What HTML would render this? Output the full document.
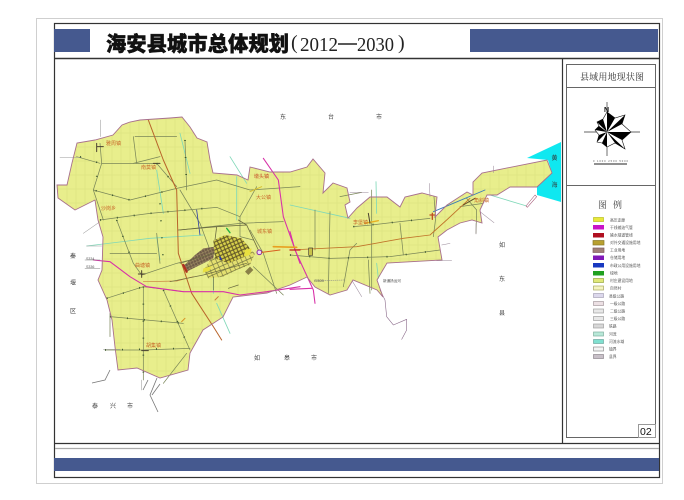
<!DOCTYPE html>
<html><head><meta charset="utf-8"><style>
html,body{margin:0;padding:0;background:#fff;width:684px;height:500px;overflow:hidden}
svg{display:block}
text{font-family:"Liberation Sans","Noto Sans CJK SC",sans-serif}
.s{font-family:"Liberation Serif","Noto Serif CJK SC",serif}
.l{font-size:6px;fill:#444}
.o{font-size:5px;fill:#c8682a}
.t{font-size:3.6px;fill:#555}
</style></head><body>
<svg width="684" height="500" viewBox="0 0 684 500" xmlns="http://www.w3.org/2000/svg">
<defs>
<clipPath id="cp"><path id="county" d="M57,185 L67,185 L72,163 L77,143 L95,140 L113,135 L122,125 L130,122 L140,120 L170,118 L182,117 L190,127 L197,138 L207,142 L210,160 L213,173 L237,175 L248,180 L250,167 L270,172 L290,172 L307,167 L313,159 L325,173 L323,193 L333,183 L347,188 L350,202 L345,205 L348,218 L357,208 L370,197 L387,197 L400,207 L405,197 L422,193 L437,197 L435,217 L447,205 L467,192 L473,195 L473,182 L482,173 L547,160 L552,173 L537,187 L510,187 L497,195 L487,195 L480,210 L482,223 L472,220 L460,223 L447,230 L438,237 L442,260 L387,263 L377,280 L383,297 L377,290 L353,280 L347,290 L330,295 L315,287 L307,277 L290,285 L267,293 L233,297 L223,317 L203,330 L190,353 L188,370 L160,378 L137,368 L118,370 L115,347 L112,320 L107,300 L98,280 L102,270 L103,237 L98,220 L95,200 L75,210 L58,198 Z"/></clipPath>
<pattern id="vp" width="9" height="14" patternUnits="userSpaceOnUse"><path d="M4,0V14M0,7H9" stroke="#d8e07e" stroke-width=".5" fill="none"/></pattern>
<pattern id="cb" width="9" height="9" patternUnits="userSpaceOnUse" patternTransform="rotate(-24)"><rect width="9" height="9" fill="#6e5a48"/><path d="M4,0V9M0,4H9" stroke="#a89868" stroke-width="1.4"/></pattern>
<pattern id="cy" width="11" height="11" patternUnits="userSpaceOnUse" patternTransform="rotate(-24)"><rect width="11" height="11" fill="#d8d04a"/><path d="M5,0V11M0,5H11" stroke="#5e5428" stroke-width="3"/></pattern>
<pattern id="ce" width="14" height="14" patternUnits="userSpaceOnUse" patternTransform="rotate(-24)"><rect width="14" height="14" fill="#e4e070"/><path d="M7,0V14M0,7H14" stroke="#6e7040" stroke-width="1.8"/></pattern>
</defs>
<rect width="684" height="500" fill="#fff"/>
<rect x="36.500" y="18.500" width="626" height="465" fill="#fff" stroke="#cfcfcf"/>
<rect x="54.500" y="23.500" width="605" height="454" fill="#fff" stroke="#333" stroke-width="1.2"/>
<rect x="54" y="29" width="36" height="23" fill="#45598f"/>
<rect x="470" y="29" width="188" height="23" fill="#45598f"/>
<text x="106" y="51" font-size="20.2" font-weight="900" fill="#111" stroke="#111" stroke-width=".5" textLength="183">海安县城市总体规划</text>
<g class="s" fill="#222">
<text x="291" y="49" class="s" font-size="20">(</text>
<text x="300" y="51" class="s" font-size="20" textLength="38" lengthAdjust="spacingAndGlyphs">2012</text>
<path d="M338,44H357" stroke="#222" stroke-width="1.4"/>
<text x="357" y="51" class="s" font-size="20" textLength="37" lengthAdjust="spacingAndGlyphs">2030</text>
<text x="398" y="49" class="s" font-size="20">)</text>
</g>
<path d="M54,58.500H659" stroke="#333" stroke-width="1.4"/>
<path d="M54,443.500H659" stroke="#333" stroke-width="1.2"/>
<path d="M562.500,58V443" stroke="#333" stroke-width="1.2"/>
<path d="M55,448.500H659" stroke="#aaa" stroke-width="1.2"/>
<rect x="54" y="458" width="605" height="13" fill="#45598f"/>
<rect x="566.500" y="64.500" width="89" height="373" fill="#fff" stroke="#666"/>
<path d="M566,87.500H656M566,185.500H656" stroke="#666"/>
<text x="580" y="80" class="s" font-size="9" fill="#333" textLength="64">县域用地现状图</text>
<rect x="638.500" y="424.500" width="17" height="13" fill="#fff" stroke="#999"/>
<text x="640" y="435" font-size="10.500" fill="#111">02</text>

<!-- sea -->
<path d="M527,158 L561,142 L561,202 L537,195 L537,187 L552,173 L548,160 Z" fill="#0fe8f0"/>
<text x="551.500" y="160" class="t" style="font-size:6px;fill:#333">黄</text>
<text x="551.500" y="187" class="t" style="font-size:6px;fill:#333">海</text>

<!-- county -->
<use href="#county" fill="#e8ee8c"/>
<g clip-path="url(#cp)"><rect x="50" y="110" width="510" height="280" fill="url(#vp)"/></g>

<!-- west half, coordinates from 3x crop -->
<g transform="translate(50 120) scale(.33333)" fill="none" stroke-linejoin="round" stroke-linecap="round">
<g stroke="#7fd8b8" stroke-width="2.500">
<path d="M110,378 L300,355 L460,345"/><path d="M390,40 L420,160"/><path d="M540,110 L590,190"/><path d="M560,170 L560,300"/><path d="M320,150 L340,280"/><path d="M320,350 L330,420"/><path d="M490,430 L490,520"/><path d="M500,550 L540,640"/>
</g>
<g stroke="#7a8658" stroke-width="2.200">
<path d="M130,210 L240,240 L380,205 L500,180 L600,210 L750,200"/>
<path d="M150,300 L300,280 L500,262 L570,290"/>
<path d="M390,330 L570,310 L700,305"/>
<path d="M200,300 L250,430 L275,465"/>
<path d="M275,465 L380,430 L500,400"/>
<path d="M170,535 L280,500 L400,515"/>
<path d="M180,590 L400,610"/>
<path d="M165,690 L280,690 L420,685"/>
<path d="M280,500 L280,780"/>
<path d="M340,510 L420,690"/>
<path d="M150,70 L155,130 L130,210"/>
<path d="M155,130 L320,130 L380,200"/>
<path d="M390,210 L450,310 L480,390"/>
<path d="M250,50 L260,130"/>
<path d="M320,340 L330,430"/>
<path d="M620,200 L570,290 L570,350 L610,360"/>
<path d="M610,440 L700,525"/>
<path d="M600,330 L640,400 L680,520"/>
<path d="M80,110 L150,130"/>
<path d="M405,60 L410,210"/>
<path d="M410,700 L340,790"/>
<path d="M255,50 H380M130,210 L160,300M250,130 L330,110M180,400 H320M180,580 L180,650"/>
</g>
<path d="M440,270 L450,345" stroke="#2a3aa8" stroke-width="2.400"/>
<!-- highways -->
<path d="M295,0 L340,120 L380,210 L385,400 L425,520 L490,620 L515,660" stroke="#b8642a" stroke-width="3"/>
<path d="M130,420 L180,425 L240,470 L290,500 L400,515 L520,515 L570,525 L650,515 L750,500" stroke="#d830a8" stroke-width="3.200"/>
<path d="M640,115 L685,180 L700,290 L750,430" stroke="#d830a8" stroke-width="3.200"/>
<path d="M280,485 L380,483 L430,470" stroke="#c88040" stroke-width="2"/>
<!-- town blobs -->
<g stroke="#4a4030" stroke-width="3">
<path d="M140,70V95M140,80H160"/><path d="M310,130H330"/><path d="M265,462H285M275,452V472"/><path d="M275,692H295"/><path d="M395,605L405,595" stroke="#d89020"/><path d="M495,540L505,530" stroke="#c88040"/><path d="M600,215L635,200" stroke="#d8c030"/>
</g>
<!-- outside thin stubs -->
<g stroke="#999" stroke-width="1.600">
<path d="M30,112H95"/><path d="M152,0V50"/><path d="M110,378H155"/><path d="M160,688H210"/><path d="M275,780V810"/><path d="M100,340L150,305"/>
</g>
<path d="M105,420H150M105,445H150" stroke="#777" stroke-width="1.400"/>
<!-- road markers -->
<g stroke="#3f5a30" stroke-width="5" stroke-dasharray="3 48" stroke-linecap="butt">
<path d="M90,110 L150,130 L130,210 L240,240 L380,205 M200,300 L250,430 M280,500 L280,780 M340,510 L420,690 M165,690 L420,685 M405,60 L410,210 M150,300 L300,280 L500,262 M320,130 L380,200 M170,535 L280,500 M180,590 L400,610 M330,250 L340,430"/>
</g>
</g>

<!-- city from 3x crop -->
<g transform="translate(170 220) scale(.33333)" stroke-linejoin="round" stroke-linecap="round" fill="none">
<path d="M125,115 L235,85 L255,100 L240,135 L200,150 L160,170 L115,175 L100,150 Z" fill="url(#ce)"/>
<path d="M38,140 L75,105 L100,85 L135,80 L130,115 L90,135 L50,155 Z" fill="url(#cb)"/>
<path d="M130,62 L165,45 L215,55 L240,85 L225,110 L175,130 L135,115 Z" fill="url(#cy)"/>
<path d="M40,135 L50,155" stroke="#b03020" stroke-width="7"/>
<path d="M225,90 L245,85 L240,105 L222,110Z" fill="#e8e040"/>
<path d="M100,145 L125,138 L118,152 L98,158Z" fill="#e8e040"/>
<path d="M170,25 L180,38" stroke="#20b040" stroke-width="4"/>
<path d="M150,112 L153,118" stroke="#2a3aa8" stroke-width="5"/>
<path d="M25,30 L140,20 L230,15 M140,20 L135,60 M230,15 L265,90 M230,15 L205,0" stroke="#6a6a40" stroke-width="2.400"/>
<path d="M30,130 L130,100 M130,170 L130,210 M0,185 L100,165 L230,130" stroke="#6a6a40" stroke-width="2"/>
<path d="M225,155 L240,140 L250,150 L235,165Z" fill="#8a8048"/>
<path d="M175,205 L205,195" stroke="#6a6a40" stroke-width="2"/>
<circle cx="268" cy="97" r="7" fill="#f0d8f0" stroke="#8a2ca8" stroke-width="3"/>
<path d="M275,97 L330,90" stroke="#d86020" stroke-width="3"/>
</g>

<!-- east of city / east half -->
<g transform="translate(290 130) scale(.33333)" fill="none" stroke-linejoin="round" stroke-linecap="round">
<g stroke="#7fd8b8" stroke-width="2.500">
<path d="M258,155 L260,250"/><path d="M600,195 L710,228"/><path d="M0,225 L180,265"/><path d="M260,400 L265,445"/>
</g>
<g stroke="#7a8658" stroke-width="2.200">
<path d="M0,375 L120,385 L300,380 L450,360"/>
<path d="M190,290 L245,285 L330,275 L420,265"/>
<path d="M245,180 L245,480"/>
<path d="M120,245 L115,490"/>
<path d="M75,240 L75,360"/>
<path d="M330,280 L340,375"/>
<path d="M160,470 L180,360 L200,340"/>
<path d="M432,200 L437,265 L430,320"/>
<path d="M510,230 L580,220"/>
<path d="M530,205 L560,240 L558,310"/>
<path d="M235,390 L240,490"/>
<path d="M150,200 L215,187"/>
</g>
<path d="M0,360 L200,350 L340,325 L420,315 L470,270 L540,205" stroke="#c0742a" stroke-width="2.600"/>
<path d="M430,245 L490,220 L585,180" stroke="#3a7ab8" stroke-width="2.600"/>
<path d="M520,225 L555,205" stroke="#5c4a26" stroke-width="3"/>
<path d="M-60,0 M0,305 L15,360 L70,480 L75,520" stroke="#d830a8" stroke-width="3.200"/>
<path d="M0,478 L65,475" stroke="#d830a8" stroke-width="3.200"/>
<path d="M0,360H30" stroke="#c02020" stroke-width="4"/>
<path d="M-50,350 L20,352" stroke="#e8a020" stroke-width="5"/>
<path d="M56,354H68V376H56Z" stroke="#4a4030" stroke-width="2" fill="#c8c24a"/>
<path d="M225,280 L265,272" stroke="#e8b020" stroke-width="4"/>
<path d="M235,250 L240,280" stroke="#4a4030" stroke-width="3"/>
<path d="M420,255 L435,255 M427,250 L427,268" stroke="#c05020" stroke-width="4"/>
<path d="M75,452 L165,450" stroke="#888" stroke-width="1.600" stroke-dasharray="3 3"/>
<g stroke="#3f5a30" stroke-width="5" stroke-dasharray="3 55" stroke-linecap="butt">
<path d="M0,375 L120,385 L300,380 L450,360M190,290 L330,275 L420,265"/>
</g>
<!-- outside border lines -->
<g stroke="#9a8a9a" stroke-width="1.600">
<path d="M180,187 L235,187"/><path d="M418,160 L420,200"/><path d="M610,108 L610,128"/><path d="M455,345 L480,340"/><path d="M440,392 L485,392"/><path d="M570,245 L612,278"/><path d="M558,280V312"/><path d="M188,455 L215,500"/>
</g>
<path d="M270,480 L285,510 L290,560 L310,585 L350,568 L350,600 L335,628" stroke="#8a6a8a" stroke-width="1.800"/>
<path d="M708,228 L735,195 L740,200 L712,232 Z" stroke="#a05070" stroke-width="1.600" fill="#fff"/>
</g>

<use href="#county" fill="none" stroke="#a8708c" stroke-width=".9"/>

<!-- south-west stubs -->
<path d="M92,383 L105,380 L110,370 M148,380 L143,390 M157,378 L150,395 L158,412" fill="none" stroke="#777" stroke-width=".8"/>
<path d="M152,395 L160,384" stroke="#777" stroke-width=".8"/>

<!-- map labels -->
<g class="l">
<text class="l" x="280" y="119">东</text><text class="l" x="328" y="119">台</text><text class="l" x="376" y="119">市</text>
<text class="l" x="499" y="247">如</text><text class="l" x="499" y="281">东</text><text class="l" x="499" y="315">县</text>
<text class="l" x="254" y="360">如</text><text class="l" x="284" y="360">皋</text><text class="l" x="311" y="360">市</text>
<text class="l" x="92" y="408">泰</text><text class="l" x="110" y="408">兴</text><text class="l" x="127" y="408">市</text>
<text class="l" x="70" y="258">秦</text><text class="l" x="70" y="285">堰</text><text class="l" x="70" y="313">区</text>
</g>
<g>
<text class="o" x="106" y="145">雅周镇</text>
<text class="o" x="141" y="169">南莫镇</text>
<text class="o" x="101" y="210">沙岗乡</text>
<text class="o" x="135" y="267">曲塘镇</text>
<text class="o" x="146" y="347">胡集镇</text>
<text class="o" x="254" y="178" style="fill:#c8502a">墩头镇</text>
<text class="o" x="256" y="199">大公镇</text>
<text class="o" x="257" y="233">城东镇</text>
<text class="o" x="353" y="224">李堡镇</text>
<text class="o" x="474" y="202">角斜镇</text>
</g>
<g class="t">
<text class="t" x="86" y="260">S334</text><text class="t" x="86" y="268">S336</text>
<text class="t" x="314" y="282" style="font-size:4px">G328</text>
<text class="t" x="383" y="282">新通扬运河</text>
</g>

<!-- compass -->
<path d="M607,102V156M584,132H640" stroke="#333" stroke-width=".7"/>
<path d="M607,112 L615,118 L625,115 L622,124 L631,132 L622,140 L625,149 L615,143 L607,147 L602,143 L597,142 L599,135 L595,130 L599,126 L597,122 L603,119 Z" fill="#fff" stroke="#111" stroke-width=".6"/>
<path d="M607,132 L607,112 L615,118Z M607,132 L625,115 L622,124Z M607,132 L631,132 L622,140Z M607,132 L625,149 L615,143Z M607,132 L607,147 L602,143Z M607,132 L597,142 L599,135Z M607,132 L595,130 L599,126Z M607,132 L597,122 L603,119Z" fill="#000"/>
<text x="604" y="112" font-size="7" font-weight="700" fill="#111">N</text>
<path d="M594,164H627" stroke="#222" stroke-width="1"/>
<text x="593" y="162" font-size="2.600" fill="#555" textLength="35">0 1000 2500 5000</text>

<!-- legend -->
<text x="598" y="208" class="s" font-size="9" fill="#444">图</text>
<text x="613" y="208" class="s" font-size="9" fill="#444">例</text>
<g stroke-width=".7">
<rect x="593.500" y="217.500" width="10" height="4" fill="#e8e83c" stroke="#b8c020"/>
<rect x="593" y="225" width="11" height="4.500" fill="#c814c8"/>
<rect x="593" y="233" width="11" height="4.500" fill="#b01020"/>
<rect x="593" y="240.500" width="11" height="4.500" fill="#b8a030" stroke="#8a7a28"/>
<rect x="593" y="248" width="11" height="4.500" fill="#a08078" stroke="#806060"/>
<rect x="593" y="255.500" width="11" height="4.500" fill="#8018b8"/>
<rect x="593" y="263" width="11" height="4.500" fill="#1838c0"/>
<rect x="593" y="271" width="11" height="4.500" fill="#20a020"/>
<rect x="593.500" y="278.500" width="10" height="4" fill="#e0e878" stroke="#98a840"/>
<rect x="593.500" y="286" width="10" height="4" fill="#f4f4c0" stroke="#a8a860"/>
<rect x="593.500" y="293.500" width="10" height="4" fill="#dcd8ec" stroke="#a8a4b8"/>
<rect x="593.500" y="301.500" width="10" height="4" fill="#ece0e4" stroke="#a89ca0"/>
<rect x="593.500" y="309" width="10" height="4" fill="#e8e8e8" stroke="#a0a0a0"/>
<rect x="593.500" y="316.500" width="10" height="4" fill="#e8e8e8" stroke="#a0a0a0"/>
<rect x="593.500" y="324" width="10" height="4" fill="#d8d8d8" stroke="#a0a0a0"/>
<rect x="593.500" y="332" width="10" height="4" fill="#b8e8d8" stroke="#80b0a0"/>
<rect x="593.500" y="339.500" width="10" height="4" fill="#80e0d0" stroke="#70a8a0"/>
<rect x="593.500" y="347" width="10" height="4" fill="#f4f4f4" stroke="#909090"/>
<rect x="593.500" y="354.500" width="10" height="4" fill="#c8c0c8" stroke="#908890"/>
</g>
<g font-size="3.800" fill="#555">
<text x="610" y="221.500">高压走廊</text><text x="610" y="229">干线输油气管</text><text x="610" y="236.500">输水隧道管线</text><text x="610" y="244">对外交通设施用地</text><text x="610" y="251.500">工业用地</text><text x="610" y="259">仓储用地</text><text x="610" y="267">市政公用设施用地</text><text x="610" y="274.500">绿地</text><text x="610" y="282">村庄建设用地</text><text x="610" y="289.500">自然村</text><text x="609" y="297.500">县级公路</text><text x="610" y="305">一级公路</text><text x="610" y="312.500">二级公路</text><text x="610" y="320">三级公路</text><text x="609" y="327.500">铁路</text><text x="609" y="335.500">河流</text><text x="609" y="343">河流水域</text><text x="609" y="350.500">镇界</text><text x="609" y="358">县界</text>
</g>
</svg>
</body></html>
